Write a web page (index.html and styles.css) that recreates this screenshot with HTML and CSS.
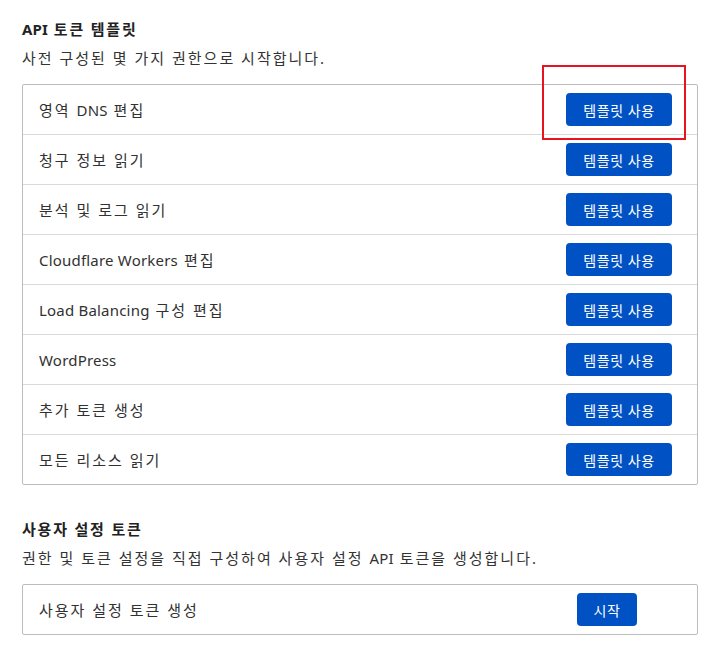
FILE: index.html
```html
<!DOCTYPE html>
<html lang="ko">
<head>
<meta charset="utf-8">
<link rel="stylesheet" href="styles.css">
</head>
<body>
<div class="page">
  <section class="section">
    <h2 class="title"><span class="en">API</span> 토큰 템플릿</h2>
    <p class="desc">사전 구성된 몇 가지 권한으로 시작합니다.</p>
    <div class="table">
      <div class="row"><span class="label">영역 <span class="en">DNS</span> 편집</span><span class="cell"><button class="btn">템플릿 사용</button><span class="highlight"></span></span></div>
      <div class="row"><span class="label">청구 정보 읽기</span><span class="cell"><button class="btn">템플릿 사용</button></span></div>
      <div class="row"><span class="label">분석 및 로그 읽기</span><span class="cell"><button class="btn">템플릿 사용</button></span></div>
      <div class="row"><span class="label"><span class="en">Cloudflare Workers</span> 편집</span><span class="cell"><button class="btn">템플릿 사용</button></span></div>
      <div class="row"><span class="label"><span class="en">Load Balancing</span> 구성 편집</span><span class="cell"><button class="btn">템플릿 사용</button></span></div>
      <div class="row"><span class="label"><span class="en">WordPress</span></span><span class="cell"><button class="btn">템플릿 사용</button></span></div>
      <div class="row"><span class="label">추가 토큰 생성</span><span class="cell"><button class="btn">템플릿 사용</button></span></div>
      <div class="row"><span class="label">모든 리소스 읽기</span><span class="cell"><button class="btn">템플릿 사용</button></span></div>
    </div>
  </section>
  <section class="section second">
    <h2 class="title">사용자 설정 토큰</h2>
    <p class="desc">권한 및 토큰 설정을 직접 구성하여 사용자 설정 <span class="en">API</span> 토큰을 생성합니다.</p>
    <div class="table">
      <div class="row custom"><span class="label">사용자 설정 토큰 생성</span><span class="cell"><button class="btn small">시작</button></span></div>
    </div>
  </section>
</div>
</body>
</html>
```

FILE: styles.css
```css
* { box-sizing: border-box; }
html, body { margin: 0; padding: 0; background: #fff; }
body {
  font-family: "Noto Sans", "Noto Sans CJK KR", sans-serif;
  color: #313131;
  font-size: 15px;
}
.page {
  padding: 17px 16px 0 22px;
  width: 714px;
}
.title {
  margin: 0;
  font-size: 15px;
  font-weight: 700;
  line-height: 24px;
  color: #222;
  letter-spacing: 1.8px;
}
.desc {
  margin: 5px 0 0;
  font-size: 15px;
  line-height: 24px;
  color: #333;
  letter-spacing: 2px;
}
.en { letter-spacing: 0.2px; }
.table {
  margin-top: 14px;
  border: 1px solid #bcbcbc;
  border-radius: 2px;
}
.row {
  display: flex;
  align-items: center;
  justify-content: space-between;
  height: 50px;
  padding: 0 25px 0 16px;
  border-top: 1px solid #d9d9d9;
}
.row:first-child { border-top: none; height: 49px; }
.label { font-size: 15px; letter-spacing: 2px; }
.cell { position: relative; display: flex; }
.btn {
  width: 106px;
  height: 33px;
  border: none;
  border-radius: 4px;
  background: #0051c3;
  color: #fff;
  font-family: "Noto Sans", "Noto Sans CJK KR", sans-serif;
  font-size: 14px;
  letter-spacing: 0.6px;
  padding: 0;
}
.btn.small { width: 60px; }
.custom { padding-right: 60px; }
.second { margin-top: 32px; }
.highlight {
  position: absolute;
  left: -24px;
  top: -28px;
  width: 144px;
  height: 75px;
  border: 2px solid #e5141e;
}
```
